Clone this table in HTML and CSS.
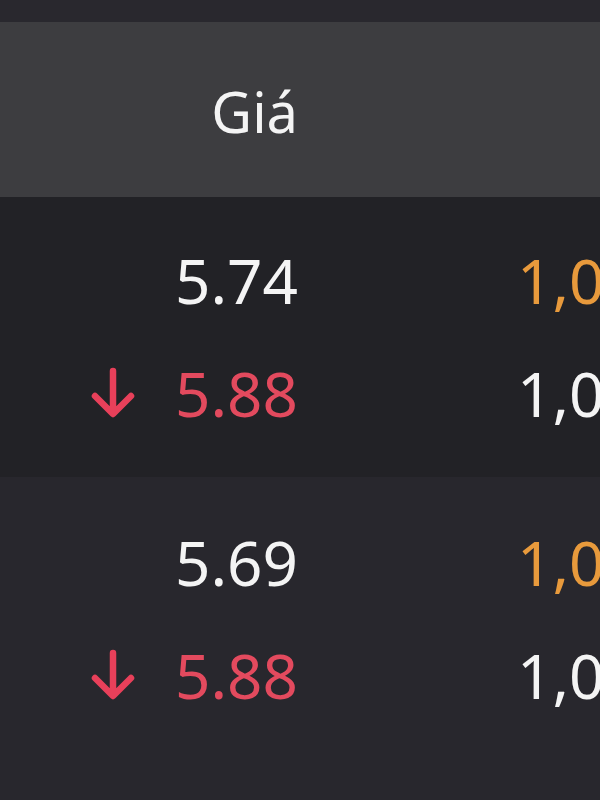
FILE: index.html
```html
<!DOCTYPE html>
<html lang="vi">
<head>
<meta charset="utf-8">
<link rel="stylesheet" href="styles.css">
</head>
<body>
<div class="screen">
  <div class="topbar"></div>
  <div class="header">
    <div class="col-price">Giá</div>
    <div class="col-qty"></div>
  </div>
  <div class="row row-a">
    <div class="line">
      <div class="col-price">5.74</div>
      <div class="col-qty orange">1,000</div>
    </div>
    <div class="line">
      <div class="col-price red"><svg class="arrow" viewBox="0 0 48 52" width="48" height="52"><path d="M24 4 V46 M6 29 L24 47 L42 29" fill="none" stroke="currentColor" stroke-width="6.5" stroke-linecap="round" stroke-linejoin="round"/></svg><span>5.88</span></div>
      <div class="col-qty">1,000</div>
    </div>
  </div>
  <div class="row row-b">
    <div class="line">
      <div class="col-price">5.69</div>
      <div class="col-qty orange">1,000</div>
    </div>
    <div class="line">
      <div class="col-price red"><svg class="arrow" viewBox="0 0 48 52" width="48" height="52"><path d="M24 4 V46 M6 29 L24 47 L42 29" fill="none" stroke="currentColor" stroke-width="6.5" stroke-linecap="round" stroke-linejoin="round"/></svg><span>5.88</span></div>
      <div class="col-qty">1,000</div>
    </div>
  </div>
</div>
</body>
</html>
```
FILE: styles.css
```css
html, body {
  margin: 0;
  padding: 0;
  background: #28272d;
}
.screen {
  width: 600px;
  height: 800px;
  overflow: hidden;
  font-family: "Noto Sans", "Open Sans", sans-serif;
  font-weight: 400;
  color: #f4f4f4;
}
.topbar {
  height: 22px;
  background: #29282e;
}
.header {
  height: 175px;
  background: #3d3d40;
  display: flex;
  align-items: center;
  font-size: 56px;
}
.header .col-price {
  padding-top: 2px;
}
.col-price {
  width: 298px;
  flex: none;
  display: flex;
  justify-content: flex-end;
  align-items: center;
  gap: 38px;
}
.col-qty {
  margin-left: 219px;
  white-space: nowrap;
}
.row {
  height: 280px;
  box-sizing: border-box;
  padding-top: 27px;
  font-size: 62px;
}
.row-a {
  background: #222226;
}
.row-b {
  background: #28272d;
  padding-top: 29px;
}
.line {
  display: flex;
  height: 113px;
  line-height: 113px;
  white-space: nowrap;
}
.orange {
  color: #e89a3c;
}
.red {
  color: #e34a5e;
}
.arrow {
  display: block;
  color: #e8405a;
  margin-top: -2px;
}
```
